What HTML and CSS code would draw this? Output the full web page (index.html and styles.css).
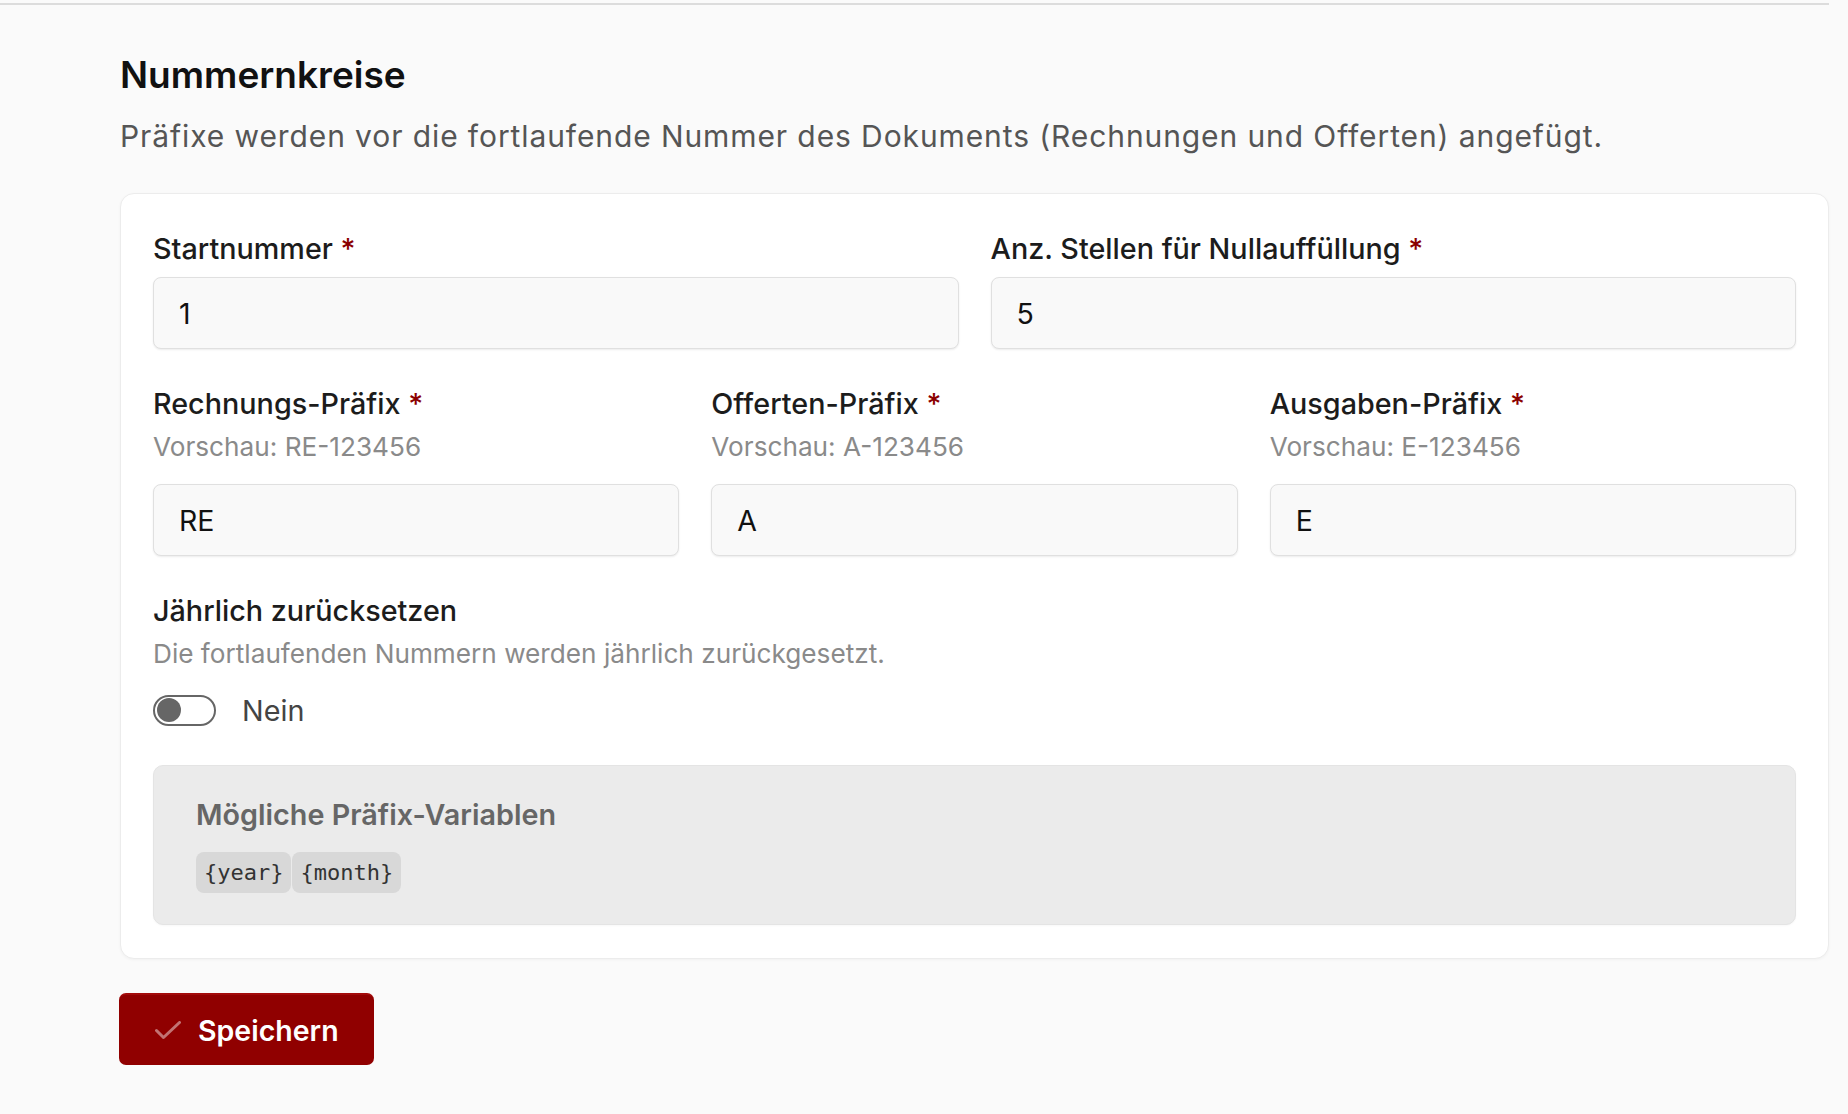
FILE: index.html
```html
<!DOCTYPE html>
<html lang="de">
<head>
    <meta charset="UTF-8">
    <meta name="viewport" content="width=device-width, initial-scale=1.0">
    <title>Nummernkreise</title>
    <link rel="stylesheet" href="styles.css">
</head>
<body>

    <div class="topbar"></div>

    <main class="page">
        <h1 class="title">Nummernkreise</h1>
        <p class="intro">Präfixe werden vor die fortlaufende Nummer des Dokuments (Rechnungen und Offerten) angefügt.</p>

        <div class="card">
            <div class="row two">
                <div class="field">
                    <label class="label">Startnummer <span class="req">*</span></label>
                    <input class="input" type="text" value="1">
                </div>
                <div class="field">
                    <label class="label">Anz. Stellen für Nullauffüllung <span class="req">*</span></label>
                    <input class="input" type="text" value="5">
                </div>
            </div>

            <div class="row three">
                <div class="field">
                    <label class="label with-hint">Rechnungs-Präfix <span class="req">*</span></label>
                    <div class="hint">Vorschau: RE-123456</div>
                    <input class="input" type="text" value="RE">
                </div>
                <div class="field">
                    <label class="label with-hint">Offerten-Präfix <span class="req">*</span></label>
                    <div class="hint">Vorschau: A-123456</div>
                    <input class="input" type="text" value="A">
                </div>
                <div class="field">
                    <label class="label with-hint">Ausgaben-Präfix <span class="req">*</span></label>
                    <div class="hint">Vorschau: E-123456</div>
                    <input class="input" type="text" value="E">
                </div>
            </div>

            <div class="row">
                <div class="field">
                    <label class="label with-hint">Jährlich zurücksetzen</label>
                    <div class="hint">Die fortlaufenden Nummern werden jährlich zurückgesetzt.</div>
                    <div class="switch-row">
                        <span class="switch"><span class="knob"></span></span>
                        <span class="switch-text">Nein</span>
                    </div>
                </div>
            </div>

            <div class="vars">
                <div class="vars-title">Mögliche Präfix-Variablen</div>
                <div class="chips">
                    <code class="chip">{year}</code>
                    <code class="chip">{month}</code>
                </div>
            </div>
        </div>

        <button class="save">
            <svg class="check" width="26" height="19" viewBox="0 0 26 19">
                <polyline points="1.5,9.5 8.5,16.5 24.5,1.5" fill="none" stroke="currentColor" stroke-width="3" stroke-linecap="round" stroke-linejoin="round"/>
            </svg>
            Speichern
        </button>
    </main>

</body>
</html>
```

FILE: styles.css
```css
body {
    margin: 0;
    background-color: #fafafa;
    font-family: Inter, "Noto Sans", sans-serif;
    color: #1a1a1a;
}

.topbar {
    height: 3px;
    margin-right: 19px;
    border-bottom: 2px solid #dcdcdc;
}

.page {
    padding: 46px 19px 40px 120px;
}

.title {
    margin: 0;
    font-size: 37px;
    line-height: 48px;
    font-weight: 600;
    color: #111;
}

.intro {
    margin: 16px 0 0;
    font-size: 30px;
    line-height: 42px;
    letter-spacing: 0.9px;
    color: #555;
}

.card {
    margin-top: 36px;
    background-color: #fff;
    border: 1px solid #ececec;
    border-radius: 14px;
    padding: 34px 32px 33px;
    box-shadow: 0 1px 3px rgba(0, 0, 0, 0.04);
}

.row {
    display: grid;
    gap: 32px;
    margin-bottom: 34px;
}

.row.two {
    grid-template-columns: repeat(2, 1fr);
}

.row.three {
    grid-template-columns: repeat(3, 1fr);
}

.field {
    display: flex;
    flex-direction: column;
}

.label {
    font-size: 28.75px;
    line-height: 42px;
    font-weight: 500;
    color: #1c1c1c;
    margin-bottom: 7px;
}

.label.with-hint {
    margin-bottom: 4px;
}

.req {
    color: #8b0000;
}

.hint {
    font-size: 26.2px;
    line-height: 36px;
    color: #8a8a8a;
    margin-bottom: 19px;
}

.input {
    box-sizing: border-box;
    height: 72px;
    width: 100%;
    padding: 0 25px;
    font-family: inherit;
    font-size: 28.5px;
    color: #111;
    background-color: #f9f9f9;
    border: 1px solid #e0e0e0;
    border-radius: 8px;
    box-shadow: 0 1px 2px rgba(0, 0, 0, 0.08);
    outline: none;
}

.switch-row {
    display: flex;
    align-items: center;
    gap: 26px;
    height: 42px;
    margin-top: -2px;
}

.switch {
    box-sizing: border-box;
    display: flex;
    align-items: center;
    width: 63px;
    height: 31px;
    padding: 0 2px;
    border: 2px solid #666;
    border-radius: 16px;
}

.knob {
    width: 24px;
    height: 24px;
    border-radius: 50%;
    background-color: #666;
}

.switch-text {
    font-size: 28.75px;
    color: #444;
}

.vars {
    background-color: #ebebeb;
    border: 1px solid #e4e4e4;
    border-radius: 10px;
    padding: 28px 42px 31px;
    box-shadow: 0 1px 2px rgba(0, 0, 0, 0.03);
}

.vars-title {
    font-size: 28.75px;
    line-height: 42px;
    font-weight: 600;
    color: #666;
    margin-bottom: 16px;
}

.chips {
    display: flex;
    gap: 1px;
}

.chip {
    display: flex;
    align-items: center;
    height: 41px;
    padding: 0 8px;
    background-color: #d8d8d8;
    border-radius: 8px;
    font-family: "DejaVu Sans Mono", "Liberation Mono", monospace;
    font-size: 22px;
    color: #333;
}

.save {
    display: flex;
    align-items: center;
    gap: 17px;
    margin-top: 34px;
    margin-left: -1px;
    height: 72px;
    padding: 0 35px 0 36px;
    background-color: #900000;
    border: none;
    border-top: 2px solid #a30a0a;
    border-radius: 7px;
    color: #fff;
    font-family: inherit;
    font-size: 28.5px;
    font-weight: 600;
    cursor: pointer;
}

.check {
    color: rgba(255, 255, 255, 0.45);
}
```
